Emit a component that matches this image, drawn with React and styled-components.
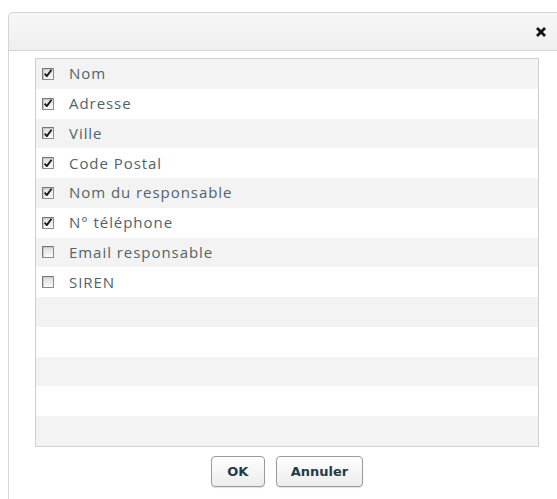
import styled, { createGlobalStyle } from 'styled-components';

const GlobalStyle = createGlobalStyle`
  html, body {
    margin: 0;
    padding: 0;
    background: #ffffff;
    overflow: hidden;
  }
  body {
    font-family: 'Open Sans', 'DejaVu Sans', sans-serif;
  }
`;

const fields = [
  { label: 'Nom', checked: true },
  { label: 'Adresse', checked: true },
  { label: 'Ville', checked: true },
  { label: 'Code Postal', checked: true },
  { label: 'Nom du responsable', checked: true },
  { label: 'N° téléphone', checked: true },
  { label: 'Email responsable', checked: false },
  { label: 'SIREN', checked: false },
];

const EMPTY_ROWS = 5;

function CheckMark() {
  return (
    <svg width="11" height="11" viewBox="0 0 11 11">
      <path
        d="M1.8 5.6 L4.2 8.4 L9.4 1.4"
        fill="none"
        stroke="#1a1a1a"
        strokeWidth="2"
        strokeLinejoin="round"
      />
    </svg>
  );
}

function App() {
  return (
    <Page>
      <GlobalStyle />
      <Dialog>
        <Header>
          <CloseButton aria-label="Fermer">
            <svg width="12" height="12" viewBox="0 0 12 12">
              <path
                d="M2 2 L10 10 M10 2 L2 10"
                stroke="#111"
                strokeWidth="2.8"
              />
            </svg>
          </CloseButton>
        </Header>
        <Body>
          <FieldList>
            {fields.map((field) => (
              <Row key={field.label}>
                <Box>{field.checked && <CheckMark />}</Box>
                <Label>{field.label}</Label>
              </Row>
            ))}
            {Array.from({ length: EMPTY_ROWS }).map((_, index) => (
              <Row key={`empty-${index}`} />
            ))}
          </FieldList>
          <Actions>
            <Button>OK</Button>
            <Button>Annuler</Button>
          </Actions>
        </Body>
      </Dialog>
    </Page>
  );
}

const Page = styled.div`
  padding: 12px 0 0 8px;
  height: 499px;
  box-sizing: border-box;
`;

const Dialog = styled.div`
  width: 570px;
  height: 487px;
  border: 1px solid #d5d5d5;
  border-right: none;
  border-bottom: none;
  border-radius: 5px 0 0 0;
  background: #ffffff;
  box-sizing: border-box;
  overflow: hidden;
`;

const Header = styled.div`
  height: 37px;
  display: flex;
  align-items: center;
  justify-content: flex-start;
  padding-left: 526px;
  background: linear-gradient(#f7f7f7, #efefef);
  border-bottom: 1px solid #d6d6d6;
  border-radius: 5px 0 0 0;
`;

const CloseButton = styled.div`
  display: flex;
  align-items: center;
  justify-content: center;
  width: 12px;
  height: 12px;
  margin-top: 1px;
`;

const Body = styled.div`
  padding: 7px 0 0 26px;
`;

const FieldList = styled.div`
  width: 504px;
  height: 389px;
  box-sizing: border-box;
  border: 1px solid #cfcfcf;
  overflow: hidden;
  display: flex;
  flex-direction: column;
`;

const Row = styled.div`
  flex: 0 0 29.75px;
  display: flex;
  align-items: center;
  padding-left: 6px;
  &:nth-child(odd) {
    background: #f3f3f3;
  }
  &:nth-child(even) {
    background: #ffffff;
  }
`;

const Box = styled.div`
  width: 12px;
  height: 12px;
  box-sizing: border-box;
  border: 1px solid #8c8c8c;
  border-top-color: #777;
  border-left-color: #777;
  border-radius: 1px;
  background: linear-gradient(#dcdcdc, #fbfbfb);
  box-shadow: inset 1px 1px 0 #c9c9c9;
  display: flex;
  align-items: center;
  justify-content: center;
  margin-right: 15px;
`;

const Label = styled.span`
  font-family: 'Open Sans', 'DejaVu Sans', sans-serif;
  font-size: 15px;
  color: #50636a;
  letter-spacing: 0.95px;
  margin-top: -1px;
`;

const Actions = styled.div`
  display: flex;
  justify-content: center;
  gap: 11px;
  width: 504px;
  margin-top: 9px;
`;

const Button = styled.button`
  height: 31px;
  min-width: 54px;
  padding: 0 14px;
  border: 1px solid #9c9c9c;
  border-radius: 4px;
  background: linear-gradient(#ffffff, #ececec);
  font-family: 'DejaVu Sans', 'Open Sans', sans-serif;
  font-size: 13px;
  font-weight: 700;
  color: #1f3c46;
  box-shadow: 0 1px 1px rgba(0, 0, 0, 0.12);
`;

export default App;
